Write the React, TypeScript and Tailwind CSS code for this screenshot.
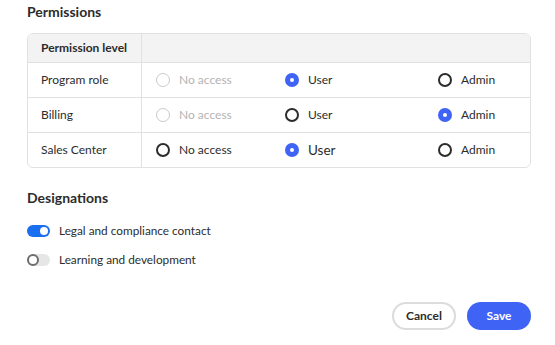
import { useState } from "react";

type Level = "none" | "user" | "admin";

const ROWS: { label: string; value: Level; noneDisabled: boolean; big?: boolean }[] = [
  { label: "Program role", value: "user", noneDisabled: true },
  { label: "Billing", value: "admin", noneDisabled: true },
  { label: "Sales Center", value: "user", noneDisabled: false, big: true },
];

function Radio({
  checked,
  disabled,
  label,
  big,
}: {
  checked: boolean;
  disabled?: boolean;
  label: string;
  big?: boolean;
}) {
  return (
    <span className="flex items-center gap-[9px]">
      {checked ? (
        <span className="grid h-[14px] w-[14px] place-items-center rounded-full bg-[#3e63f5]">
          <span className="h-[4px] w-[4px] rounded-full bg-white" />
        </span>
      ) : (
        <span
          className={
            disabled
              ? "h-[14px] w-[14px] rounded-full border-[1.5px] border-[#c9c9c9]"
              : "h-[14px] w-[14px] rounded-full border-2 border-[#2c2c2c]"
          }
        />
      )}
      <span
        className={
          (disabled ? "text-[#b3b3b3] " : "text-[#2c2c2c] ") + (big ? "text-[13.5px]" : "text-[12px]")
        }
      >
        {label}
      </span>
    </span>
  );
}

function Toggle({ on }: { on: boolean }) {
  return on ? (
    <span className="flex h-[12px] w-[23px] items-center justify-end rounded-full bg-[#1a6ef0] pr-[2px]">
      <span className="h-[8px] w-[8px] rounded-full bg-white" />
    </span>
  ) : (
    <span className="flex h-[12px] w-[23px] items-center rounded-full bg-[#e6e6e6]">
      <span className="h-[12px] w-[12px] rounded-full border-2 border-[#6e6e6e] bg-white" />
    </span>
  );
}

export default function App() {
  const [rows] = useState(ROWS);

  return (
    <div className="h-[345px] w-[555px] bg-white pl-[27px] pr-[24px] pt-[2px] text-[#2c2c2c] font-['Lato','Noto_Sans',sans-serif]">
      <h3 className="m-0 text-[14px] font-bold leading-[20px]">Permissions</h3>

      <div className="mt-[11px] overflow-hidden rounded-[6px] border border-[#e1e1e1]">
        <div className="flex h-[28px] bg-[#f3f3f3]">
          <div className="flex w-[114px] items-center border-r border-[#e1e1e1] pl-[13px] text-[12px] font-bold">
            Permission level
          </div>
          <div className="flex-1" />
        </div>
        {rows.map((row) => (
          <div key={row.label} className="flex h-[35px] border-t border-[#e1e1e1]">
            <div className="flex w-[114px] items-center border-r border-[#e1e1e1] pl-[13px] text-[12px]">
              {row.label}
            </div>
            <div className="flex flex-1 items-center pl-[14px]">
              <div className="w-[129px]">
                <Radio checked={row.value === "none"} disabled={row.noneDisabled} label="No access" />
              </div>
              <div className="w-[153px]">
                <Radio checked={row.value === "user"} label="User" big={row.big} />
              </div>
              <div>
                <Radio checked={row.value === "admin"} label="Admin" />
              </div>
            </div>
          </div>
        ))}
      </div>

      <h3 className="m-0 mt-[20px] text-[14px] font-bold leading-[20px]">Designations</h3>

      <div className="mt-[14px] flex flex-col gap-[11px]">
        <label className="flex items-center gap-[9px] text-[11.8px]">
          <Toggle on />
          Legal and compliance contact
        </label>
        <label className="flex items-center gap-[9px] text-[11.8px]">
          <Toggle on={false} />
          Learning and development
        </label>
      </div>

      <div className="mt-[34px] flex justify-end gap-[11px]">
        <button
          type="button"
          className="h-[28px] w-[64px] rounded-full border-2 border-[#dcdcdc] bg-white text-[12px] font-bold text-[#2c2c2c]"
        >
          Cancel
        </button>
        <button
          type="button"
          className="h-[28px] w-[64px] rounded-full bg-[#3e63f5] text-[12px] font-bold text-white"
        >
          Save
        </button>
      </div>
    </div>
  );
}
